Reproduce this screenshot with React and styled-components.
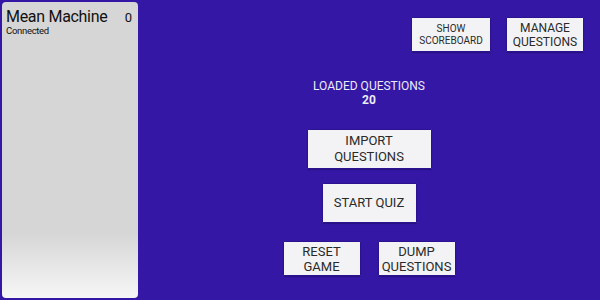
import React from "react";
import styled, { createGlobalStyle } from "styled-components";

const Global = createGlobalStyle`
  html, body { margin: 0; padding: 0; }
  body {
    background: #3417a5;
    font-family: Roboto, "Liberation Sans", sans-serif;
    width: 600px;
    height: 300px;
    overflow: hidden;
  }
`;

const Page = styled.div`
  display: flex;
  height: 300px;
  box-sizing: border-box;
  padding: 2px;
  gap: 2px;
`;

const Sidebar = styled.aside`
  width: 136px;
  flex: none;
  border-radius: 4px;
  background: linear-gradient(to bottom, #d6d6d6 0%, #d6d6d6 78%, #f6f6f6 100%);
  box-sizing: border-box;
  padding: 7px 6px 0 4px;
`;

const PlayerRow = styled.div`
  display: flex;
  justify-content: space-between;
  align-items: flex-start;
  color: #111;
`;

const PlayerName = styled.div`
  font-size: 16px;
  line-height: 16px;
  letter-spacing: -0.3px;
`;

const PlayerStatus = styled.div`
  font-size: 9.5px;
  line-height: 11px;
  letter-spacing: -0.3px;
`;

const Score = styled.div`
  font-size: 13px;
  line-height: 16px;
  margin-top: 1px;
`;

const Main = styled.main`
  flex: 1;
  display: flex;
  flex-direction: column;
  align-items: center;
`;

const TopBar = styled.div`
  align-self: stretch;
  display: flex;
  justify-content: flex-end;
  gap: 15px;
  padding: 15px 14px 0 0;
`;

const Button = styled.button`
  box-sizing: border-box;
  width: ${(p) => p.$w}px;
  height: ${(p) => p.$h}px;
  background: #f3f3f5;
  border: 1px solid #2a1290;
  border-radius: 1px;
  box-shadow: 0 1px 1px rgba(0, 0, 0, 0.25);
  color: #2a2a2a;
  font-family: Roboto, "Liberation Sans", sans-serif;
  font-size: ${(p) => p.$fs}px;
  line-height: ${(p) => p.$lh}px;
  padding: 0;
  text-align: center;
  display: flex;
  align-items: center;
  justify-content: center;
`;

const Info = styled.div`
  margin-top: 27px;
  color: #ecebf8;
  font-size: 12px;
  line-height: 14px;
  text-align: center;
`;

const Count = styled.div`
  font-weight: bold;
`;

const Row = styled.div`
  display: flex;
  gap: 17px;
  margin-top: ${(p) => p.$mt}px;
`;

export default function App() {
  return (
    <>
      <Global />
      <Page>
        <Sidebar>
          <PlayerRow>
            <div>
              <PlayerName>Mean Machine</PlayerName>
              <PlayerStatus>Connected</PlayerStatus>
            </div>
            <Score>0</Score>
          </PlayerRow>
        </Sidebar>
        <Main>
          <TopBar>
            <Button $w={80} $h={35} $fs={10} $lh={12}>
              SHOW
              <br />
              SCOREBOARD
            </Button>
            <Button $w={78} $h={35} $fs={12} $lh={14}>
              MANAGE
              <br />
              QUESTIONS
            </Button>
          </TopBar>
          <Info>
            LOADED QUESTIONS
            <Count>20</Count>
          </Info>
          <Row $mt={22}>
            <Button $w={125} $h={40} $fs={13} $lh={16}>
              IMPORT
              <br />
              QUESTIONS
            </Button>
          </Row>
          <Row $mt={14}>
            <Button $w={95} $h={40} $fs={13} $lh={16}>
              START QUIZ
            </Button>
          </Row>
          <Row $mt={18}>
            <Button $w={78} $h={35} $fs={13} $lh={15}>
              RESET
              <br />
              GAME
            </Button>
            <Button $w={78} $h={35} $fs={13} $lh={15}>
              DUMP
              <br />
              QUESTIONS
            </Button>
          </Row>
        </Main>
      </Page>
    </>
  );
}
